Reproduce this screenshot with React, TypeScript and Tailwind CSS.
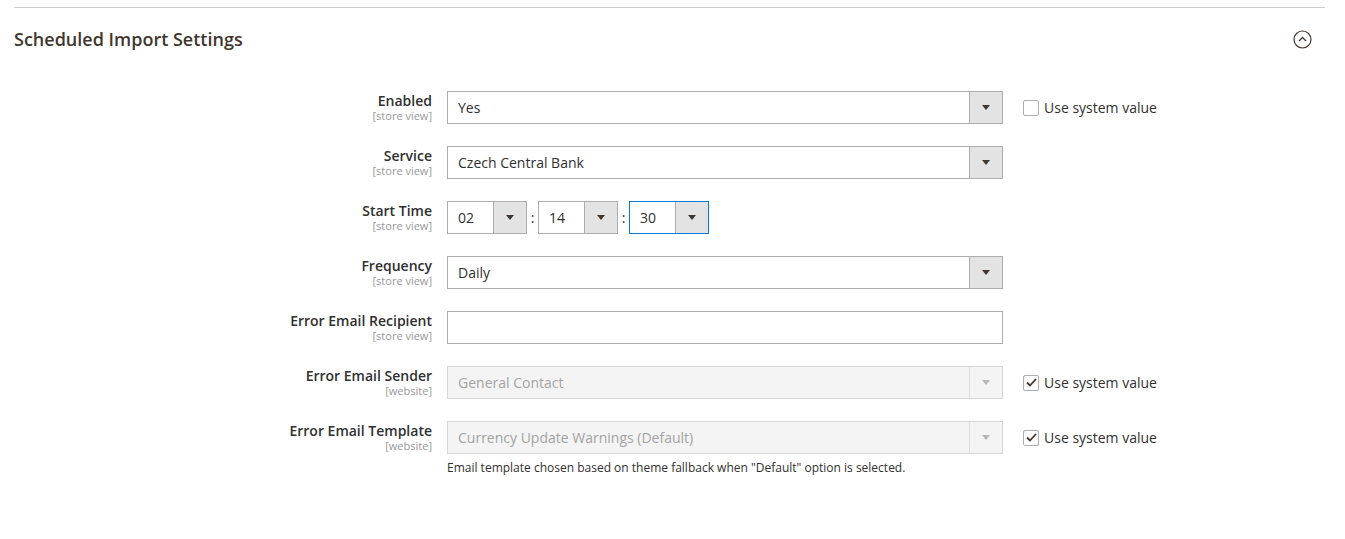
import React from 'react';

type Row = {
  label: string;
  scope: string;
  kind: 'select' | 'time' | 'input';
  value?: string;
  disabled?: boolean;
  system?: 'off' | 'on';
  note?: string;
};

const rows: Row[] = [
  { label: 'Enabled', scope: '[store view]', kind: 'select', value: 'Yes', system: 'off' },
  { label: 'Service', scope: '[store view]', kind: 'select', value: 'Czech Central Bank' },
  { label: 'Start Time', scope: '[store view]', kind: 'time' },
  { label: 'Frequency', scope: '[store view]', kind: 'select', value: 'Daily' },
  { label: 'Error Email Recipient', scope: '[store view]', kind: 'input' },
  { label: 'Error Email Sender', scope: '[website]', kind: 'select', value: 'General Contact', disabled: true, system: 'on' },
  {
    label: 'Error Email Template',
    scope: '[website]',
    kind: 'select',
    value: 'Currency Update Warnings (Default)',
    disabled: true,
    system: 'on',
    note: 'Email template chosen based on theme fallback when "Default" option is selected.',
  },
];

const Arrow = ({ disabled }: { disabled?: boolean }) => (
  <svg width="8" height="5" viewBox="0 0 8 5">
    <path d="M0 0h8L4 5z" fill={disabled ? '#b8b8b8' : '#41362f'} />
  </svg>
);

const Select = ({ value, disabled, width, focused }: { value: string; disabled?: boolean; width: string; focused?: boolean }) => (
  <div
    className={`flex h-[33px] ${width} border ${
      focused ? 'border-[#007bdb]' : disabled ? 'border-[#d6d6d6]' : 'border-[#adadad]'
    } ${disabled ? 'bg-[#f4f4f4]' : 'bg-white'}`}
  >
    <div className={`flex-1 flex items-center pl-[10px] text-[14px] ${disabled ? 'text-[#a3a3a3]' : 'text-[#303030]'}`}>
      {value}
    </div>
    <div
      className={`w-[33px] flex items-center justify-center border-l ${
        disabled ? 'border-[#dedede] bg-[#f4f4f4]' : 'border-[#adadad] bg-[#e3e3e3]'
      }`}
    >
      <Arrow disabled={disabled} />
    </div>
  </div>
);

const Checkbox = ({ checked }: { checked: boolean }) => (
  <div className="flex items-center gap-[5px]">
    <div className="w-[16px] h-[16px] border border-[#adadad] rounded-[2px] bg-white flex items-center justify-center">
      {checked && (
        <svg width="11" height="9" viewBox="0 0 11 9">
          <path d="M1 4.5l3 3L10 1" fill="none" stroke="#41362f" strokeWidth="1.8" />
        </svg>
      )}
    </div>
    <span className="text-[14px] text-[#303030] pb-[1px]">Use system value</span>
  </div>
);

export default function App() {
  return (
    <div className="min-h-screen bg-white font-['Open_Sans',sans-serif] pt-[7px] pl-[14px] pr-[20px]">
      <div className="border-t border-[#cccccc]" />
      <div className="flex items-center justify-between h-[64px] pr-[13px]">
        <h2 className="text-[18px] font-semibold text-[#41362f] pb-[2px]">Scheduled Import Settings</h2>
        <svg width="19" height="19" viewBox="0 0 19 19" className="mb-[1px]">
          <circle cx="9.5" cy="9.5" r="8.5" fill="none" stroke="#41362f" strokeWidth="1.2" />
          <path d="M6 11l3.5-3.5L13 11" fill="none" stroke="#41362f" strokeWidth="1.3" />
        </svg>
      </div>
      <div className="pt-[19px] flex flex-col gap-[22px]">
        {rows.map((row) => (
          <div key={row.label} className="flex">
            <div className="w-[418px] text-right pt-[2px] leading-none">
              <div className="text-[14px] font-semibold text-[#303030] leading-[16px]">{row.label}</div>
              <div className="text-[11px] text-[#999999] leading-[13px]">{row.scope}</div>
            </div>
            <div className="ml-[15px] w-[556px]">
              {row.kind === 'select' && <Select value={row.value ?? ''} disabled={row.disabled} width="w-[556px]" />}
              {row.kind === 'input' && <div className="h-[33px] w-[556px] border border-[#adadad] bg-white" />}
              {row.kind === 'time' && (
                <div className="flex items-center">
                  <Select value="02" width="w-[80px]" />
                  <span className="w-[11px] text-center text-[14px] text-[#303030]">:</span>
                  <Select value="14" width="w-[80px]" />
                  <span className="w-[11px] text-center text-[14px] text-[#303030]">:</span>
                  <Select value="30" width="w-[80px]" focused />
                </div>
              )}
              {row.note && <div className="mt-[5px] text-[12px] text-[#303030]">{row.note}</div>}
            </div>
            {row.system && (
              <div className="ml-[20px] h-[33px] flex items-center">
                <Checkbox checked={row.system === 'on'} />
              </div>
            )}
          </div>
        ))}
      </div>
    </div>
  );
}
